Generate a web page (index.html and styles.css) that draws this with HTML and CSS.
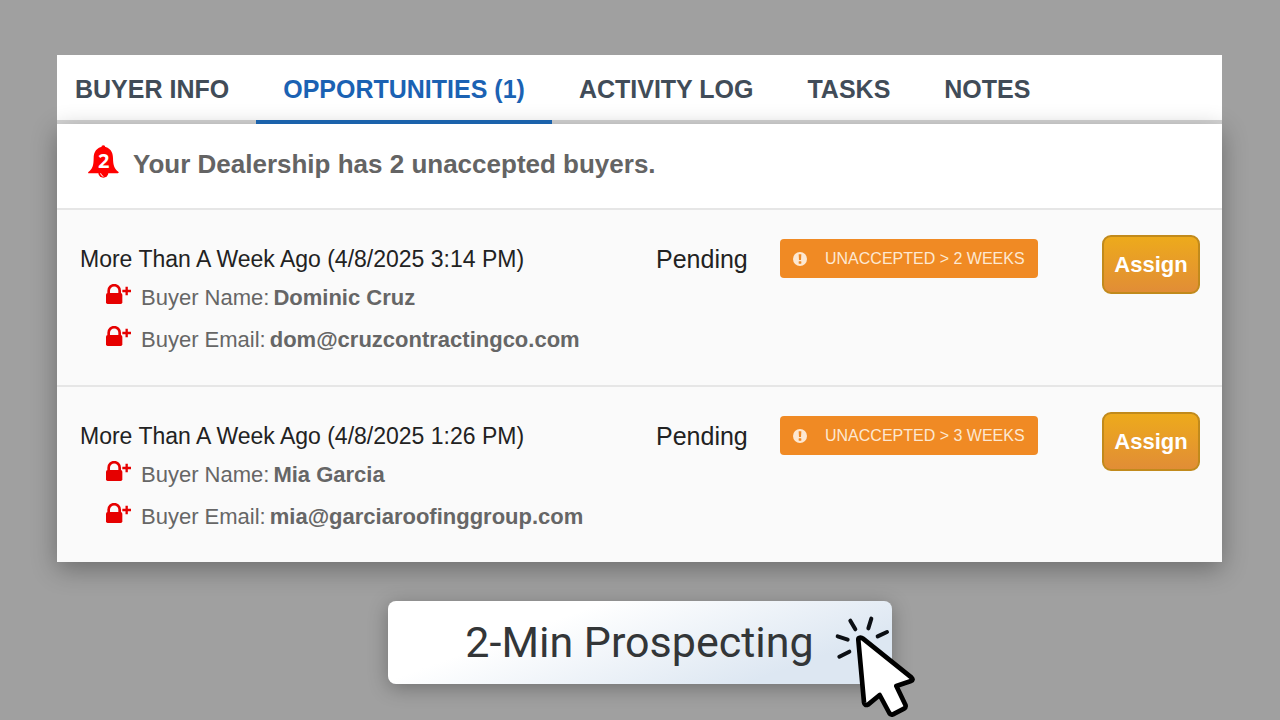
FILE: index.html
```html
<!DOCTYPE html>
<html lang="en">
<head>
  <meta charset="UTF-8" />
  <meta name="viewport" content="width=device-width, initial-scale=1.0"/>
  <title>2-Min Prospecting</title>
  <link rel="stylesheet" href="styles.css">
</head>
<body>
  <!-- Shared icons -->
  <svg class="sprite" aria-hidden="true">
    <symbol id="lock-plus" viewBox="0 0 75 60">
      <path d="M8 28 V20 a16.500 16.500 0 0 1 33 0 V28" fill="none" stroke="#e60000" stroke-width="8"/>
      <rect x="0" y="27" width="49" height="33" rx="5" fill="#e60000"/>
      <path d="M49 21 H75 M62 8 V34" fill="none" stroke="#e60000" stroke-width="7"/>
    </symbol>
    <symbol id="alert-circle" viewBox="0 0 42 42">
      <circle cx="21" cy="21" r="21" fill="#fde8d2"/>
      <path d="M17 7 H25 L24 24 H18 Z" fill="#f08a24"/>
      <rect x="17" y="28" width="8" height="7" rx="1" fill="#f08a24"/>
    </symbol>
  </svg>

  <div class="panel">
    <!-- Tabs -->
    <nav class="tabs">
      <a class="tab" href="#info">BUYER INFO</a>
      <a class="tab active" href="#opportunities">OPPORTUNITIES (1)</a>
      <a class="tab" href="#log">ACTIVITY LOG</a>
      <a class="tab" href="#tasks">TASKS</a>
      <a class="tab" href="#notes">NOTES</a>
    </nav>

    <div class="panel-body">
      <div class="notice">
        <svg class="bell" viewBox="0 0 93 99" aria-hidden="true">
          <circle cx="46" cy="7" r="6" fill="#f00"/>
          <path d="M46 5 C66 6 75 21 75 39 C75 61 80 73 91 80 Q94 84 89 85 H3 Q-2 84 2 80 C13 73 17 61 17 39 C17 21 26 6 46 5 Z" fill="#f00"/>
          <path d="M31 83 H61 A15 15 0 0 1 31 83 Z" fill="#f00"/>
          <path d="M38 86 Q39 92 45 94" fill="none" stroke="#fff" stroke-width="3" stroke-linecap="round"/>
          <text class="bell-count" x="47" y="68" text-anchor="middle">2</text>
        </svg>
        <h1>Your Dealership has 2 unaccepted buyers.</h1>
      </div>

      <!-- Opportunities -->
      <ul class="rows">
        <li class="row">
          <div class="details">
            <p class="date">More Than A Week Ago (4/8/2025 3:14 PM)</p>
            <p class="field"><svg class="lock"><use href="#lock-plus"/></svg>Buyer Name: <strong>Dominic Cruz</strong></p>
            <p class="field"><svg class="lock"><use href="#lock-plus"/></svg>Buyer Email: <strong>dom@cruzcontractingco.com</strong></p>
          </div>
          <p class="status">Pending</p>
          <p class="badge"><svg class="badge-icon"><use href="#alert-circle"/></svg>UNACCEPTED &gt; 2 WEEKS</p>
          <button class="btn-assign" type="button">Assign</button>
        </li>
        <li class="row">
          <div class="details">
            <p class="date">More Than A Week Ago (4/8/2025 1:26 PM)</p>
            <p class="field"><svg class="lock"><use href="#lock-plus"/></svg>Buyer Name: <strong>Mia Garcia</strong></p>
            <p class="field"><svg class="lock"><use href="#lock-plus"/></svg>Buyer Email: <strong>mia@garciaroofinggroup.com</strong></p>
          </div>
          <p class="status">Pending</p>
          <p class="badge"><svg class="badge-icon"><use href="#alert-circle"/></svg>UNACCEPTED &gt; 3 WEEKS</p>
          <button class="btn-assign" type="button">Assign</button>
        </li>
      </ul>
    </div>
  </div>

  <!-- Call to action -->
  <button class="btn-prospect" type="button">
    2-Min Prospecting
    <svg class="cursor" viewBox="45 75 243 309" aria-hidden="true">
      <path d="M91 92 L106 118 M154 86 L145 115 M201 126 L173 139 M53 139 L83 149 M58 200 L88 185" fill="none" stroke="#0c0f14" stroke-width="12" stroke-linecap="round"/>
      <path d="M115 150 C114 142 123 141 129 146 L274 262 Q282 270 273 273 L229 288 L256 344 Q259 352 252 356 L219 373 Q212 376 208 369 L179 315 L145 343 Q134 349 132 337 Z" fill="#fff" stroke="#000" stroke-width="14" stroke-linejoin="round"/>
    </svg>
  </button>
</body>
</html>
```
FILE: styles.css
```css
* { box-sizing: border-box; }
body { margin: 0; padding: 55px 58px 36px 57px; background: #a0a0a0; font-family: "Liberation Sans", Arial, sans-serif; overflow: hidden; }
h1, p, ul { margin: 0; padding: 0; }
button { font-family: inherit; cursor: pointer; }
.sprite { position: absolute; width: 0; height: 0; }

.tabs { display: flex; background: white; border-bottom: 4px solid #d4d4d4; }
.tab {
  margin-bottom: -4px;
  padding: 3px 27px 0;
  border-bottom: 4px solid transparent;
  font-size: 25px;
  font-weight: bold;
  line-height: 62px;
  color: #414c58;
  text-decoration: none;
  white-space: nowrap;
}
.tab:first-child { padding-left: 18px; }
.tab.active { color: #1b62b3; border-bottom-color: #1b62ab; }

.panel-body { background: white; box-shadow: 0 7px 24px rgba(0,0,0,0.32); }
.notice { display: flex; align-items: center; gap: 14px; height: 84px; padding: 0 31px 4px; }
.notice h1 { font-size: 26px; line-height: 32px; color: #646464; }
.bell { width: 31px; height: 33px; margin-bottom: 6px; }
.bell-count { font-family: "Open Sans", sans-serif; font-size: 60px; font-weight: bold; fill: white; }

.rows { list-style: none; }
.row {
  display: grid;
  grid-template-columns: 1fr 124px 322px 98px;
  align-items: start;
  padding: 25px 22px 24px 23px;
  border-top: 2px solid #e6e6e6;
  background: #fafafa;
}
.details { padding-top: 6px; }
.date { font-size: 23px; line-height: 36px; color: #222; }
.field { display: flex; gap: 4px; padding-left: 26px; font-size: 22px; line-height: 42px; color: #666; }
.lock { width: 25px; height: 20px; margin: 7px 6px 0 0; }
.status { padding-top: 6px; font-size: 25px; line-height: 36px; color: #222; }
.badge {
  display: flex;
  align-items: center;
  justify-self: start;
  gap: 18px;
  margin-top: 4px;
  padding: 0 13px;
  border-radius: 4px;
  background: #f08a24;
  font-size: 16px;
  line-height: 39px;
  color: #fde8d2;
  white-space: nowrap;
}
.badge-icon { width: 14px; height: 14px; }
.btn-assign {
  height: 59px;
  padding: 0;
  border: 2px solid #c18a1c;
  border-radius: 9px;
  background: linear-gradient(#edaa1c, #e18d36);
  font-size: 22px;
  font-weight: bold;
  color: white;
}

.btn-prospect {
  display: block;
  position: relative;
  width: 504px;
  margin: 39px auto 0;
  padding: 0;
  border: none;
  border-radius: 8px;
  background: linear-gradient(160deg, #fff 30%, #dde7f2 80%);
  box-shadow: 0 4px 20px rgba(0,0,0,0.3);
  font-family: Roboto, sans-serif;
  font-size: 43px;
  line-height: 83px;
  color: #333638;
}
.cursor { position: absolute; top: 14px; right: -24px; width: 81px; height: 103px; }
```
